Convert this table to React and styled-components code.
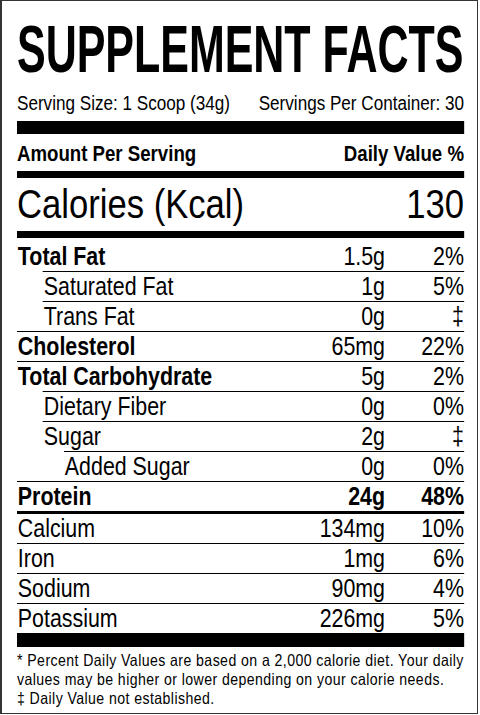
import React from 'react';
import styled, { createGlobalStyle } from 'styled-components';

const GlobalStyle = createGlobalStyle`
  html, body {
    margin: 0;
    padding: 0;
    background: #ffffff;
  }
`;

// the label face is a condensed grotesk; Liberation Sans squeezed sideways stands in for it
const SQUEEZE = 0.855;
const px = (v) => v / SQUEEZE;

export const StyledLabel = styled.div`
  box-sizing: border-box;
  width: 478px;
  height: 714px;
  border: 1px solid #333333;
  border-left-width: 2px;
  padding: 0 0 0 15px;
  background: #ffffff;
  overflow: hidden;
`;

export const StyledContent = styled.div`
  width: ${px(447)}px;
  transform: scaleX(${SQUEEZE});
  transform-origin: left top;
  color: #000000;
  font-family: "Liberation Sans", Arial, sans-serif;
  display: flex;
  flex-direction: column;
`;

export const StyledTitle = styled.div`
  margin-top: 13px;
  height: 70px;
  line-height: 70px;
  font-size: 67px;
  font-weight: 700;
  white-space: nowrap;
  transform: scaleX(0.75);
  transform-origin: left center;
`;

export const StyledServing = styled.div`
  margin-top: 7px;
  display: flex;
  justify-content: space-between;
  height: 24px;
  line-height: 24px;
  font-size: 20px;
  white-space: nowrap;
`;

export const StyledBar = styled.div`
  height: ${(p) => p.$h}px;
  margin-top: ${(p) => p.$top || 0}px;
  background: #000000;
  flex-shrink: 0;
`;

export const StyledHeader = styled.div`
  display: flex;
  justify-content: space-between;
  height: 35px;
  padding-top: 2px;
  line-height: 35px;
  font-size: 21.8px;
  font-weight: 700;
  white-space: nowrap;
`;

export const StyledCalories = styled.div`
  display: flex;
  justify-content: space-between;
  height: 53px;
  line-height: 53px;
  font-size: 40.5px;
  white-space: nowrap;
`;

export const StyledRow = styled.div`
  display: grid;
  grid-template-columns: 1fr auto ${px(79)}px;
  margin-left: ${(p) => px(p.$indent)}px;
  height: ${(p) => (p.$first ? 33 : 29)}px;
  line-height: ${(p) => (p.$first ? 36 : 29)}px;
  border-top: ${(p) => (p.$first ? 0 : p.$line)}px solid #000000;
  font-size: 25px;
  font-weight: ${(p) => (p.$strong ? 700 : 400)};
  white-space: nowrap;

  span:nth-child(1) {
    padding-left: 1px;
    font-weight: ${(p) => (p.$bold || p.$strong ? 700 : 400)};
  }
  span:nth-child(2),
  span:nth-child(3) {
    text-align: right;
  }
`;

export const StyledFootnote = styled.div`
  padding-top: 4px;
  font-size: 16.5px;
  line-height: 19px;
  letter-spacing: 0.5px;
  white-space: nowrap;
`;

const rows = [
  { name: 'Total Fat', amount: '1.5g', dv: '2%', bold: true, indent: 0 },
  { name: 'Saturated Fat', amount: '1g', dv: '5%', indent: 26 },
  { name: 'Trans Fat', amount: '0g', dv: '‡', indent: 26 },
  { name: 'Cholesterol', amount: '65mg', dv: '22%', bold: true, indent: 0 },
  { name: 'Total Carbohydrate', amount: '5g', dv: '2%', bold: true, indent: 0 },
  { name: 'Dietary Fiber', amount: '0g', dv: '0%', indent: 26 },
  { name: 'Sugar', amount: '2g', dv: '‡', indent: 26 },
  { name: 'Added Sugar', amount: '0g', dv: '0%', indent: 47 },
  { name: 'Protein', amount: '24g', dv: '48%', strong: true, indent: 0 },
  { name: 'Calcium', amount: '134mg', dv: '10%', indent: 0, line: 3 },
  { name: 'Iron', amount: '1mg', dv: '6%', indent: 0 },
  { name: 'Sodium', amount: '90mg', dv: '4%', indent: 0 },
  { name: 'Potassium', amount: '226mg', dv: '5%', indent: 0 },
];

export default function App() {
  return (
    <>
      <GlobalStyle />
      <StyledLabel>
        <StyledContent>
          <StyledTitle>SUPPLEMENT FACTS</StyledTitle>
          <StyledServing>
            <span>Serving Size: 1 Scoop (34g)</span>
            <span>Servings Per Container: 30</span>
          </StyledServing>
          <StyledBar $h={13} $top={6} />
          <StyledHeader>
            <span>Amount Per Serving</span>
            <span>Daily Value %</span>
          </StyledHeader>
          <StyledBar $h={7} />
          <StyledCalories>
            <span>Calories (Kcal)</span>
            <span>130</span>
          </StyledCalories>
          <StyledBar $h={7} />
          {rows.map((r, i) => (
            <StyledRow
              key={r.name}
              $first={i === 0}
              $indent={r.indent}
              $bold={r.bold}
              $strong={r.strong}
              $line={r.line || 1}
            >
              <span>{r.name}</span>
              <span>{r.amount}</span>
              <span>{r.dv}</span>
            </StyledRow>
          ))}
          <StyledBar $h={14} />
          <StyledFootnote>
            <div>* Percent Daily Values are based on a 2,000 calorie diet. Your daily</div>
            <div>values may be higher or lower depending on your calorie needs.</div>
            <div>‡ Daily Value not established.</div>
          </StyledFootnote>
        </StyledContent>
      </StyledLabel>
    </>
  );
}
